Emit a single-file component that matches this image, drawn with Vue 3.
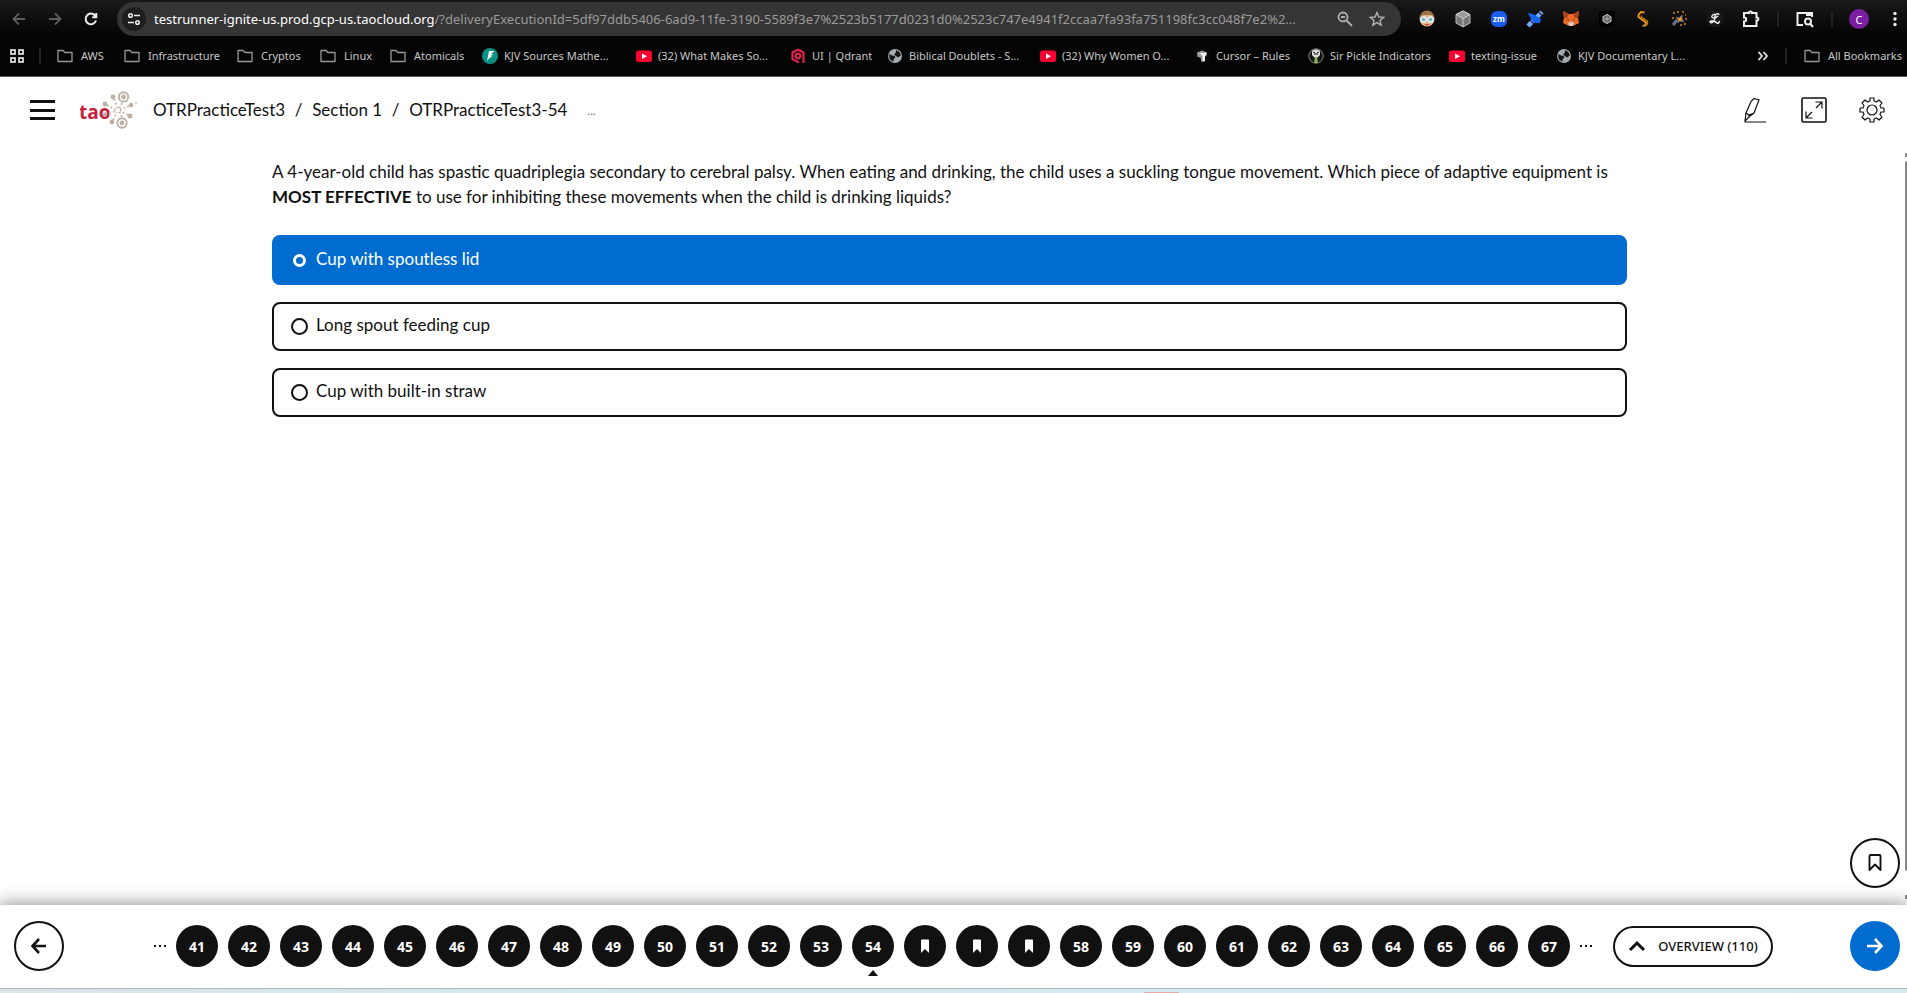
<script setup>
import { ref } from 'vue'

const bookmarks = [
  { icon: 'folder', text: 'AWS' },
  { icon: 'folder', text: 'Infrastructure' },
  { icon: 'folder', text: 'Cryptos' },
  { icon: 'folder', text: 'Linux' },
  { icon: 'folder', text: 'Atomicals' },
  { icon: 'feather', text: 'KJV Sources Mathe...' },
  { icon: 'video', text: '(32) What Makes So...' },
  { icon: 'qdrant', text: 'UI | Qdrant' },
  { icon: 'globe', text: 'Biblical Doublets - S...' },
  { icon: 'video', text: '(32) Why Women O...' },
  { icon: 'cursor', text: 'Cursor – Rules' },
  { icon: 'pickle', text: 'Sir Pickle Indicators' },
  { icon: 'video', text: 'texting-issue' },
  { icon: 'globe', text: 'KJV Documentary L...' }
]

const choices = ['Cup with spoutless lid', 'Long spout feeding cup', 'Cup with built-in straw']
const answer = ref(0)

const current = 54
const flagged = [55, 56, 57]
const items = Array.from({ length: 27 }, (_, i) => 41 + i)
</script>

<template>
  <div class="screen">
    <header class="browser">
      <div class="toolbar">
        <button class="tool" aria-label="Back">
          <svg width="16" height="16" viewBox="0 0 16 16" class="dim"><path d="M14 8H3M8 2.500L2.500 8L8 13.500" /></svg>
        </button>
        <button class="tool" aria-label="Forward">
          <svg width="16" height="16" viewBox="0 0 16 16" class="dim"><path d="M2 8H13M8 2.500L13.500 8L8 13.500" /></svg>
        </button>
        <button class="tool" aria-label="Reload">
          <svg width="16" height="16" viewBox="0 0 16 16" class="lit"><path d="M13 9.500A5.300 5.300 0 1 1 12 4.500L13 5.700M13.300 2V6.200H9.200" /></svg>
        </button>
        <div class="address">
          <button class="site" aria-label="Site information">
            <svg width="14" height="14" viewBox="0 0 14 14" class="site-icon"><circle cx="3.500" cy="3.500" r="1.800" /><path d="M7 3.500H13M1 10.500H7" /><circle cx="10.500" cy="10.500" r="1.800" /></svg>
          </button>
          <div class="url"><span class="host">testrunner-ignite-us.prod.gcp-us.taocloud.org</span>/?deliveryExecutionId=5df97ddb5406-6ad9-11fe-3190-5589f3e7%2523b5177d0231d0%2523c747e4941f2ccaa7fa93fa751198fc3cc048f7e2%2...</div>
          <button class="mini" aria-label="Zoom">
            <svg width="16" height="16" viewBox="0 0 16 16" class="grey"><circle cx="6" cy="6" r="4.500" /><path d="M9.500 9.500L15 15M4 6H8" /></svg>
          </button>
          <button class="mini" aria-label="Bookmark this tab">
            <svg width="16" height="16" viewBox="0 0 16 16" class="grey thin"><path d="M8 1.500L9.900 6L14.700 6.400L11 9.500L12.200 14.200L8 11.600L3.800 14.200L5 9.500L1.300 6.400L6.100 6Z" /></svg>
          </button>
        </div>
        <div class="extensions">
          <button class="tool" aria-label="Reader">
            <svg width="18" height="18" viewBox="0 0 18 18"><circle cx="9" cy="9" r="7.500" fill="#e2b48c" /><path d="M1.500 8A7.500 7.500 0 0 1 16.500 8L13 5L5 5Z" fill="#9a7448" /><path d="M6 14H12L9 16Z" fill="#c8533c" /><circle cx="5.500" cy="9.500" r="2.700" fill="#7cb6ce" stroke="#f5f8fa" stroke-width="1.200" /><circle cx="12.500" cy="9.500" r="2.700" fill="#7cb6ce" stroke="#f5f8fa" stroke-width="1.200" /></svg>
          </button>
          <button class="tool" aria-label="Cube">
            <svg width="18" height="18" viewBox="0 0 18 18"><path d="M9 1L16 4.500V13L9 17L2 13V4.500Z" fill="#777" stroke="#bbb" /><path d="M2 4.500L9 8.500L16 4.500L9 1Z" fill="#999" stroke="#ccc" /><path d="M9 8.500V17" stroke="#ccc" /></svg>
          </button>
          <button class="tool" aria-label="Meetings">
            <svg width="18" height="18" viewBox="0 0 18 18"><rect x="1" y="1" width="16" height="16" rx="6" fill="#1a5cf0" /><text x="9" y="12" text-anchor="middle" class="zm">zm</text></svg>
          </button>
          <button class="tool" aria-label="Satellite">
            <svg width="18" height="18" viewBox="0 0 18 18"><path d="M2 16L16 2" stroke="#77a9ff" stroke-width="4.500" stroke-dasharray="5 1" /><path d="M2 3L7 4L15 9L14 13L8 13L5 9Z" fill="#1263f1" /></svg>
          </button>
          <button class="tool" aria-label="Wallet">
            <svg width="18" height="18" viewBox="0 0 18 18"><path d="M1 1L7 4H11L17 1L16 8L17 13L12 15.500H6L1 13L2 8Z" fill="#ec6b28" /><path d="M1 1L7 4L5 8L2 8ZM17 1L11 4L13 8L16 8Z" fill="#a9441c" /><path d="M5 9L7 10L6 11ZM13 9L11 10L12 11Z" fill="#32241e" /><path d="M6 13L9 11.500L12 13L11 16H7Z" fill="#d8c7bd" /></svg>
          </button>
          <button class="tool" aria-label="Assistant">
            <svg width="18" height="18" viewBox="0 0 18 18"><rect x="1" y="1" width="16" height="16" fill="#000" /><path d="M9 4.500L13 6.700V11.300L9 13.500L5 11.300V6.700Z" fill="#555" stroke="#ccc" /><path d="M5 7L13 11M13 7L5 11M9 4.500V13.500" stroke="#bbb" stroke-width="0.700" /></svg>
          </button>
          <button class="tool" aria-label="Notes">
            <svg width="18" height="18" viewBox="0 0 18 18" fill="none" stroke="#f39a16" stroke-width="1.800"><path d="M10.500 2.500L7 2L4.500 4.500V7L12 12.500L11.500 15L8.500 16" /><path d="M7 5.500L8 7.500L13.500 11V14L10.500 16.500" stroke="#c9760d" stroke-width="1.300" /></svg>
          </button>
          <button class="tool" aria-label="Wand">
            <svg width="18" height="18" viewBox="0 0 18 18"><path d="M3 15L7 10" stroke="#6c6f86" stroke-width="3" /><path d="M6 7L9 8L12 5V9L14 12L10 11L7 13L8 10Z" fill="#ef9b28" stroke="#5e6079" /><path d="M3 3H5M7 2H9M12 2H14M15 5H16M15 9H17M14 14H16M10 15H12M2 8H4" stroke="#d58221" stroke-width="1.700" /></svg>
          </button>
          <button class="tool" aria-label="Script">
            <svg width="18" height="18" viewBox="0 0 18 18"><circle cx="9" cy="9" r="8.500" fill="#171717" /><path d="M13 5C12 2 8 5 9 8C9 11 5 14 4 12C4 10 9 11 11 13C12 14 14 12 13 11M12 6C9 9 5 8 6 6C7 4 9 4 9 5" fill="none" stroke="#eee" stroke-width="1.500" /></svg>
          </button>
          <button class="tool" aria-label="Extensions">
            <svg width="18" height="18" viewBox="0 0 18 18" class="lit"><path d="M2 3H7C6.500 1 10.500 1 10 3H14.500V7.500C17 7 17 11 14.500 10.500V16H2V11.500C5 11.500 5 7.500 2 7.500Z" /></svg>
          </button>
        </div>
        <span class="rule"></span>
        <button class="tool side" aria-label="Side panel search">
          <svg width="18" height="18" viewBox="0 0 18 18" class="lit"><path d="M7 15H1.500V3H16V7" /><path d="M10 2H17V6H10Z" fill="#eee" stroke="none" /><circle cx="12" cy="11.500" r="3" /><path d="M14 13.500L17 17" /></svg>
        </button>
        <span class="rule"></span>
        <button class="avatar" aria-label="Profile">C</button>
        <button class="more" aria-label="Browser menu">
          <svg width="6" height="16" viewBox="0 0 6 16" fill="#eee"><circle cx="3" cy="2.500" r="1.700" /><circle cx="3" cy="8" r="1.700" /><circle cx="3" cy="13.500" r="1.700" /></svg>
        </button>
      </div>

      <nav class="bookmarks" aria-label="Bookmarks">
        <button class="apps" aria-label="Apps">
          <svg width="14" height="14" viewBox="0 0 14 14" fill="none" stroke="#e8e8e8" stroke-width="1.700"><rect x="1" y="1" width="4" height="4" /><rect x="9" y="1" width="4" height="4" /><rect x="1" y="9" width="4" height="4" /><rect x="9" y="9" width="4" height="4" /></svg>
        </button>
        <span class="rule"></span>
        <div class="marks">
          <a v-for="(b, i) in bookmarks" :key="i" href="#" class="mark" :class="{ folder: b.icon === 'folder' }">
            <svg v-if="b.icon === 'folder'" width="16" height="16" viewBox="0 0 16 16" fill="none" stroke="#999" stroke-width="1.300"><path d="M1 2.500H6L8 4.500H15V13.500H1Z" stroke-linejoin="round" /></svg>
            <svg v-else-if="b.icon === 'feather'" width="16" height="16" viewBox="0 0 16 16"><circle cx="8" cy="8" r="8" fill="#0b9184" /><path d="M12.500 3H7L5 13L8 9.500L10.500 9L8.500 8L11.500 6.500L9 6Z" fill="#fff" /></svg>
            <svg v-else-if="b.icon === 'video'" width="16" height="16" viewBox="0 0 16 16"><rect y="2.500" width="16" height="11.500" rx="2.500" fill="#ff0033" /><path d="M6 5.500L11 8.200L6 11Z" fill="#fff" /></svg>
            <svg v-else-if="b.icon === 'qdrant'" width="16" height="16" viewBox="0 0 16 16" fill="none" stroke="#dc244c" stroke-width="2.200"><path d="M9 14L8 14L2.500 11.200V4.500L8 1.800L13.500 4.500V15" /><circle cx="8" cy="8" r="2.300" /></svg>
            <svg v-else-if="b.icon === 'globe'" width="16" height="16" viewBox="0 0 16 16"><circle cx="8" cy="8" r="7" fill="#a4a9ae" /><path d="M2.500 5.500C4 8.500 7 7 8 8.500C9 10 6 10.500 6.500 13.500C4 13 2 11 2.200 8ZM9 2.200C12 3 13.500 5 13.800 7.500L11 9.500C9.500 8 7 7.500 7.500 6C8.500 5 9.500 4 9 2.200Z" fill="#151515" /></svg>
            <svg v-else-if="b.icon === 'cursor'" width="16" height="16" viewBox="0 0 16 16"><rect width="16" height="16" rx="3" fill="#080808" /><path d="M3 4.500L8 2.500L13 4.500L12.500 8L11 8.500V13L7.500 14L6.500 9.500L3.500 9Z" fill="#999" /><path d="M5.500 5L13 4.800L11 8V13L8.500 13.500V8Z" fill="#f4f4f4" /></svg>
            <svg v-else width="16" height="16" viewBox="0 0 16 16"><circle cx="8" cy="8" r="7.200" fill="#171717" stroke="#888" /><path d="M4 3C6 1 10 1 12 3V7L9 10H7L4 7Z" fill="#ddd" /><path d="M5 4L7 5V7M11 4L9 5V7" stroke="#111" fill="none" /><path d="M7 9H9L10 15H6Z" fill="#83b64f" /></svg>
            <span>{{ b.text }}</span>
          </a>
        </div>
        <button class="chevrons" aria-label="More bookmarks">
          <svg width="12" height="12" viewBox="0 0 12 12" fill="none" stroke="#e8e8e8" stroke-width="1.700"><path d="M1.500 2L5 6L1.500 10M6.500 2L10 6L6.500 10" /></svg>
        </button>
        <span class="rule"></span>
        <a href="#" class="mark folder all">
          <svg width="16" height="16" viewBox="0 0 16 16" fill="none" stroke="#999" stroke-width="1.300"><path d="M1 2.500H6L8 4.500H15V13.500H1Z" stroke-linejoin="round" /></svg>
          <span>All Bookmarks</span>
        </a>
      </nav>
    </header>

    <div class="page">
      <header class="test-bar">
        <button class="menu" aria-label="Menu"><span></span><span></span><span></span></button>
        <svg class="logo" width="60" height="40" viewBox="80 90 60 40" role="img" aria-label="tao">
          <text x="79" y="119" class="tao">tao</text>
          <g fill="#bdb0a4">
            <circle cx="113" cy="97" r="2.400" /><circle cx="105" cy="104" r="2.400" /><circle cx="131" cy="105" r="2.200" />
            <circle cx="130" cy="116" r="2.500" /><circle cx="112" cy="122" r="2.400" /><circle cx="105" cy="114.500" r="2.300" />
            <circle cx="123.500" cy="97" r="2.400" /><circle cx="122" cy="123" r="2.400" /><circle cx="136" cy="103" r="1.300" opacity=".5" />
          </g>
          <g fill="none" stroke="#bdb0a4" stroke-width="1.900"><circle cx="123.500" cy="97" r="4.700" /><circle cx="122" cy="123" r="4.700" /></g>
          <g stroke="#c8beb4" stroke-width="2" stroke-dasharray="2 2"><path d="M114 99L118 109M107 105L116 110M122 103L119 109M129 106L120 110M128 115L120 111M122 117L119 112M113 120L117 112M109 113L116 111" /></g>
        </svg>
        <nav class="crumbs" aria-label="Breadcrumb">
          <span>OTRPracticeTest3</span><i>/</i><span>Section 1</span><i>/</i><span>OTRPracticeTest3-54</span>
        </nav>
        <span class="ellipsis">...</span>
        <div class="test-tools">
          <button aria-label="Highlighter">
            <svg width="26" height="26" viewBox="0 0 26 26" class="line"><path d="M11 1.500L16 3L11 16L7 19L2 24L3 16L8 4.500ZM3 16L6 18L11 16M6 18L6 20M2 25H23" /></svg>
          </button>
          <button aria-label="Fullscreen">
            <svg width="26" height="26" viewBox="0 0 26 26" class="line"><rect x="1" y="1" width="24" height="24" rx="1.500" stroke-width="1.600" /><path d="M15 11L21 5M14.500 5H21V11.500M11 15L5 21M5 14.500V21H11.500" /></svg>
          </button>
          <button aria-label="Settings">
            <svg width="26" height="26" viewBox="0 0 26 26" class="line"><path d="M11 4V1H15V4L17.500 5L20 3L23 6L21 8.500L22 11H25V15H22L21 17.500L23 20L20 23L17.500 21L15 22V25H11V22L8.500 21L6 23L3 20L5 17.500L4 15H1V11H4L5 8.500L3 6L6 3L8.500 5Z" stroke-linejoin="round" /><circle cx="13" cy="13" r="5" /></svg>
          </button>
        </div>
      </header>

      <main class="item">
        <form class="question" @submit.prevent>
          <p class="prompt">A 4-year-old child has spastic quadriplegia secondary to cerebral palsy. When eating and drinking, the child uses a suckling tongue movement. Which piece of adaptive equipment is <strong>MOST EFFECTIVE</strong> to use for inhibiting these movements when the child is drinking liquids?</p>
          <label v-for="(c, i) in choices" :key="c" class="choice" :class="{ chosen: answer === i }">
            <input v-model="answer" type="radio" name="answer" :value="i" />
            <span>{{ c }}</span>
          </label>
        </form>
        <button class="round flag" aria-label="Bookmark this question">
          <svg width="18" height="20" viewBox="0 0 18 20" fill="none" stroke="#111" stroke-width="1.900"><path d="M3.500 3C3.500 2.400 3.900 2 4.500 2H13.500C14.100 2 14.500 2.400 14.500 3V17L9 11.500L3.500 17Z" stroke-linejoin="round" /></svg>
        </button>
        <div class="scroll">
          <span class="tip up"></span><span class="thumb"></span><span class="tip down"></span>
        </div>
      </main>

      <footer class="pager">
        <button class="round" aria-label="Previous">
          <svg width="20" height="20" viewBox="0 0 20 20" fill="none" stroke="#111" stroke-width="2.600"><path d="M17 10H4M10 3L3.500 10L10 17" /></svg>
        </button>
        <nav class="pages" aria-label="Questions">
          <span class="dots"><b></b><b></b><b></b></span>
          <button v-for="n in items" :key="n" class="num" :class="{ current: n === current }" :aria-label="'Question ' + n">
            <svg v-if="flagged.includes(n)" width="10" height="14" viewBox="0 0 10 14"><path d="M1.500 0.500H8.500L9 1V14L5 10L1 14V1Z" fill="#fff" /></svg>
            <template v-else>{{ n }}</template>
          </button>
          <span class="dots"><b></b><b></b><b></b></span>
        </nav>
        <button class="overview">
          <svg width="18" height="12" viewBox="0 0 18 12" fill="none" stroke="#111" stroke-width="3"><path d="M2 10L9 3L16 10" /></svg>
          OVERVIEW (110)
        </button>
        <button class="round next" aria-label="Next">
          <svg width="20" height="20" viewBox="0 0 20 20" fill="none" stroke="#fff" stroke-width="2.600"><path d="M2 10H16M10 3L16.500 10L10 17" /></svg>
        </button>
      </footer>
    </div>
    <div class="desktop"><span></span></div>
  </div>
</template>

<style>
html, body { background: #fff; }
</style>

<style scoped>
.screen { display: flex; flex-direction: column; height: 100vh; overflow: hidden; color: #111; font-family: Lato, sans-serif; }
button { padding: 0; border: 0; background: none; color: inherit; font: inherit; display: flex; align-items: center; justify-content: center; flex: none; }
a { color: inherit; text-decoration: none; }
svg { flex: none; display: block; }

.browser { flex: none; background: linear-gradient(#191919, #040404 36px); border-bottom: 1px solid #5a5a5a; color: #c7c7c7; font-family: "Noto Sans", sans-serif; }
.toolbar { display: flex; align-items: center; height: 38px; padding-left: 1px; }
.tool { width: 36px; height: 34px; }
.dim, .lit, .grey, .site-icon { fill: none; stroke-width: 1.800; }
.dim { stroke: #5e5e5e; }
.lit { stroke: #eee; stroke-width: 2; }
.grey { stroke: #b0b0b0; }
.thin { stroke-width: 1.400; }
.site-icon { stroke: #eee; stroke-width: 1.500; }
.address { flex: 1; min-width: 0; margin-left: 8px; height: 34px; border-radius: 17px; background: #353535; display: flex; align-items: center; padding: 0 8px 0 5px; }
.site { width: 24px; height: 24px; border-radius: 12px; background: #1e1e1e; }
.url { flex: 1; min-width: 0; margin-left: 8px; font-size: 13px; line-height: 20px; color: #9b9b9b; white-space: nowrap; overflow: hidden; }
.host { color: #fff; }
.mini { width: 32px; height: 32px; }
.extensions { display: flex; margin: 0 8px 0 8px; }
.zm { font: 700 8px "Open Sans", sans-serif; fill: #fff; }
.rule { flex: none; width: 2px; height: 16px; background: #222; }
.side { width: 52px; }
.avatar { width: 20px; height: 20px; margin-left: 16px; border-radius: 10px; background: #7b1fa2; color: #fff; font-size: 11px; }
.more { width: 38px; height: 32px; margin-right: -7px; margin-left: 7px; }

.bookmarks { box-sizing: border-box; display: flex; align-items: center; height: 38px; padding: 0 5px 2px 0; font-size: 11px; line-height: 16px; }
.apps { width: 14px; margin: 0 15px 0 10px; }
.marks { flex: 1; min-width: 0; margin-left: 16px; display: grid; grid-template-columns: 67px 113px 83px 70px 92px 154px 154px 97px 153px 154px 114px 141px 107px 136px; overflow: hidden; }
.mark { display: flex; align-items: center; gap: 6px; white-space: nowrap; }
.folder { gap: 8px; }
.chevrons { width: 12px; margin-right: 16px; }
.all { margin-left: 17px; }

.page { flex: 1; min-height: 0; display: flex; flex-direction: column; }
.test-bar { flex: none; display: flex; align-items: center; height: 66px; padding: 0 22px 0 30px; }
.menu { width: 25px; height: 20px; flex-direction: column; justify-content: space-between; align-items: stretch; }
.menu span { height: 3px; background: #111; }
.logo { margin-left: 25px; }
.tao { font: 700 19px "Open Sans", sans-serif; fill: #c6213b; }
.crumbs { margin-left: 13px; display: flex; font-size: 17px; line-height: 24px; }
.crumbs i { width: 27px; text-align: center; font-style: normal; }
.ellipsis { margin-left: 20px; font-size: 12px; color: #777; }
.test-tools { margin-left: auto; display: flex; gap: 32px; }
.line { fill: none; stroke: #111; stroke-width: 1.200; }

.item { flex: 1; min-height: 0; position: relative; padding: 16px 280px 0 272px; }
.prompt { margin: 0 0 26px; font-size: 17px; line-height: 25px; }
.choice { box-sizing: border-box; display: flex; align-items: center; height: 49px; margin-bottom: 17px; padding: 0 17px; border: 2px solid #111; border-radius: 8px; font-size: 17px; line-height: 24px; }
.choice span { padding-bottom: 3px; }
.choice input { appearance: none; box-sizing: border-box; flex: none; width: 17px; height: 17px; margin: 0 8px 0 0; border: 2px solid #111; border-radius: 50%; }
.chosen { height: 50px; border-color: #006ccf; background: #006ccf; color: #fff; }
.chosen input { width: 13px; height: 13px; margin: 0 10px 0 2px; border: 3px solid #fff; }
.round { box-sizing: border-box; width: 50px; height: 50px; border: 2px solid #111; border-radius: 25px; background: #fff; }
.flag { position: absolute; right: 7px; bottom: 17px; }
.scroll { position: absolute; top: 10px; right: 0; bottom: 6px; width: 2px; display: flex; flex-direction: column; overflow: hidden; }
.thumb { flex: 1; margin: 4px 0 24px; background: #8b8b8b; border-radius: 2px 0 0 2px; }
.tip { height: 4px; background: #8b8b8b; }

.pager { box-sizing: border-box; flex: none; position: relative; display: flex; align-items: center; height: 83px; padding: 0 7px 1px 14px; background: #fff; box-shadow: 0 0 16px 2px rgba(0, 0, 0, 0.4); }
.pages { display: flex; align-items: center; gap: 10px; margin-left: 90px; }
.dots { width: 12px; display: flex; justify-content: space-between; }
.dots b { width: 2px; height: 2px; background: #111; }
.num { position: relative; width: 42px; height: 42px; border-radius: 21px; background: #111; color: #fff; font: 700 14px "Noto Sans", sans-serif; }
.current::after { content: ""; position: absolute; top: 45px; left: 16px; border: 5px solid transparent; border-top-width: 0; border-bottom: 6px solid #111; }
.overview { box-sizing: border-box; width: 160px; height: 41px; margin-left: 21px; gap: 12px; border: 2px solid #111; border-radius: 21px; font: 500 13px "Noto Sans", sans-serif; white-space: nowrap; }
.next { margin-left: auto; background: #006ccf; border-color: #006ccf; }
.desktop { position: relative; flex: none; height: 4px; border-top: 1px solid #a9b4ba; background: linear-gradient(90deg, #dbe6e6, #d5e9f1 30%, #d8e8f1); display: flex; align-items: flex-end; }
.desktop span { margin-left: 60%; width: 35px; height: 1px; background: #eba9a5; }
</style>
